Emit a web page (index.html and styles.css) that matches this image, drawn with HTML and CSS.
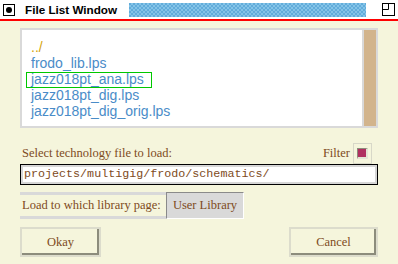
FILE: index.html
```html
<!DOCTYPE html>
<html lang="en">
<head>
  <meta charset="UTF-8" />
  <title>File List Window</title>
  <link rel="stylesheet" href="styles.css">
</head>
<body>
  <div class="titlebar">
    <span class="win-icon"><span class="dot"></span></span>
    <span class="win-title">File List Window</span>
    <span class="stripe"></span>
    <svg class="resize" width="13" height="13" viewBox="0 0 13 13">
      <rect x="0.5" y="0.5" width="12" height="12" fill="#fff" stroke="#000" />
      <path d="M6.5 0.5 V6.5 H0.5" fill="none" stroke="#000" />
    </svg>
  </div>

  <div class="content">
    <div class="listbox">
      <ul class="files">
        <li class="parent">../</li>
        <li>frodo_lib.lps</li>
        <li class="selected">jazz018pt_ana.lps</li>
        <li>jazz018pt_dig.lps</li>
        <li>jazz018pt_dig_orig.lps</li>
      </ul>
      <div class="scrollbar"></div>
    </div>

    <div class="pathrow">
      <span class="label">Select technology file to load:</span>
      <span class="filter">Filter</span>
      <span class="check"><span class="check-mark"></span></span>
    </div>

    <div class="pathinput">projects/multigig/frodo/schematics/</div>

    <div class="loadrow">
      <span class="loadlabel">Load to which library page:</span>
      <button class="userlib" type="button">User Library</button>
    </div>

    <div class="actions">
      <button class="btn okay" type="button">Okay</button>
      <button class="btn cancel" type="button">Cancel</button>
    </div>
  </div>
</body>
</html>
```

FILE: styles.css
```css
* {
  box-sizing: border-box;
}
body {
  margin: 0;
  width: 398px;
  height: 264px;
  overflow: hidden;
  background: #f5f5dc;
  color: #7e4b22;
  font-family: 'Liberation Serif', serif;
  font-size: 12.5px;
}
.titlebar {
  display: flex;
  align-items: center;
  height: 21px;
  background: #fff;
  border-bottom: 2px solid #ff0000;
}
.win-icon {
  display: flex;
  align-items: center;
  justify-content: center;
  width: 12px;
  height: 12px;
  margin-left: 3px;
  border: 1px solid #000;
}
.dot {
  width: 6px;
  height: 6px;
  border-radius: 50%;
  background: #000;
}
.win-title {
  margin-left: 10px;
  font-family: 'Liberation Sans', sans-serif;
  font-weight: 700;
  font-size: 11.7px;
  color: #000;
}
.stripe {
  flex: 1;
  height: 14px;
  margin: 0 16px 0 12px;
  background-color: #84c4e8;
  background-image: conic-gradient(#84c4e8 25%, #62acda 0 50%, #84c4e8 0 75%, #62acda 0);
  background-size: 4px 4px;
}
.resize {
  display: block;
  margin-right: 3px;
}
.content {
  display: flex;
  flex-direction: column;
  padding: 7px 20px 0;
}
.listbox {
  display: flex;
  height: 100px;
  border: 2px solid #d9d9d9;
  background: #fff;
}
.files {
  flex: 1;
  margin: 0;
  padding: 10px 0 0 4px;
  list-style: none;
  font-family: 'Liberation Sans', sans-serif;
  font-size: 14px;
  color: #4a8cc8;
}
.files li {
  width: fit-content;
  height: 16px;
  line-height: 12px;
  padding: 0 7px 0 4px;
  border: 1px solid transparent;
}
.files .parent {
  color: #d4a40c;
}
.files .selected {
  border-color: #00c800;
}
.scrollbar {
  width: 14px;
  border-left: 2px solid #d9d9d9;
  background: #d2b48c;
}
.pathrow {
  display: flex;
  align-items: center;
  height: 22px;
  margin-top: 14px;
}
.label {
  padding-left: 2px;
}
.filter {
  margin-left: auto;
}
.check {
  display: flex;
  align-items: center;
  justify-content: center;
  width: 19px;
  height: 21px;
  margin: 0 6px 0 3px;
  border: 1px solid #d8d8c8;
}
.check-mark {
  width: 11px;
  height: 11px;
  background: #b03060;
  border-style: solid;
  border-width: 1px 2px 2px 1px;
  border-color: #8c8c7c #e4e4d4 #e4e4d4 #8c8c7c;
}
.pathinput {
  height: 21px;
  padding-left: 3px;
  border: 1px solid #000;
  box-shadow: inset 0 0 0 2px #d6d6d6;
  background: #fff;
  font-family: 'Liberation Mono', monospace;
  font-size: 11.7px;
  line-height: 19px;
}
.loadrow {
  display: flex;
  height: 27px;
  margin-top: 7px;
}
.loadlabel {
  display: flex;
  align-items: center;
  width: 146px;
  padding-left: 2px;
  border-top: 3px solid #d9d9d9;
  border-bottom: 3px solid #d9d9d9;
}
.userlib {
  width: 78px;
  padding: 0;
  background: #d9d9d9;
  border: 1px solid;
  border-color: #8a8a8a #fff #fff #8a8a8a;
  font-family: 'Liberation Serif', serif;
  font-size: 12.5px;
  color: #7e4b22;
}
.actions {
  display: flex;
  justify-content: space-between;
  margin-top: 8px;
}
.btn {
  height: 30px;
  padding: 0;
  border: 2px solid #dcdccc;
  background: #f5f5dc;
  box-shadow: inset -2px -2px 0 #8c8c7c;
  font-family: 'Liberation Serif', serif;
  font-size: 12.5px;
  color: #7e4b22;
}
.okay {
  width: 81px;
}
.cancel {
  width: 89px;
}
```
